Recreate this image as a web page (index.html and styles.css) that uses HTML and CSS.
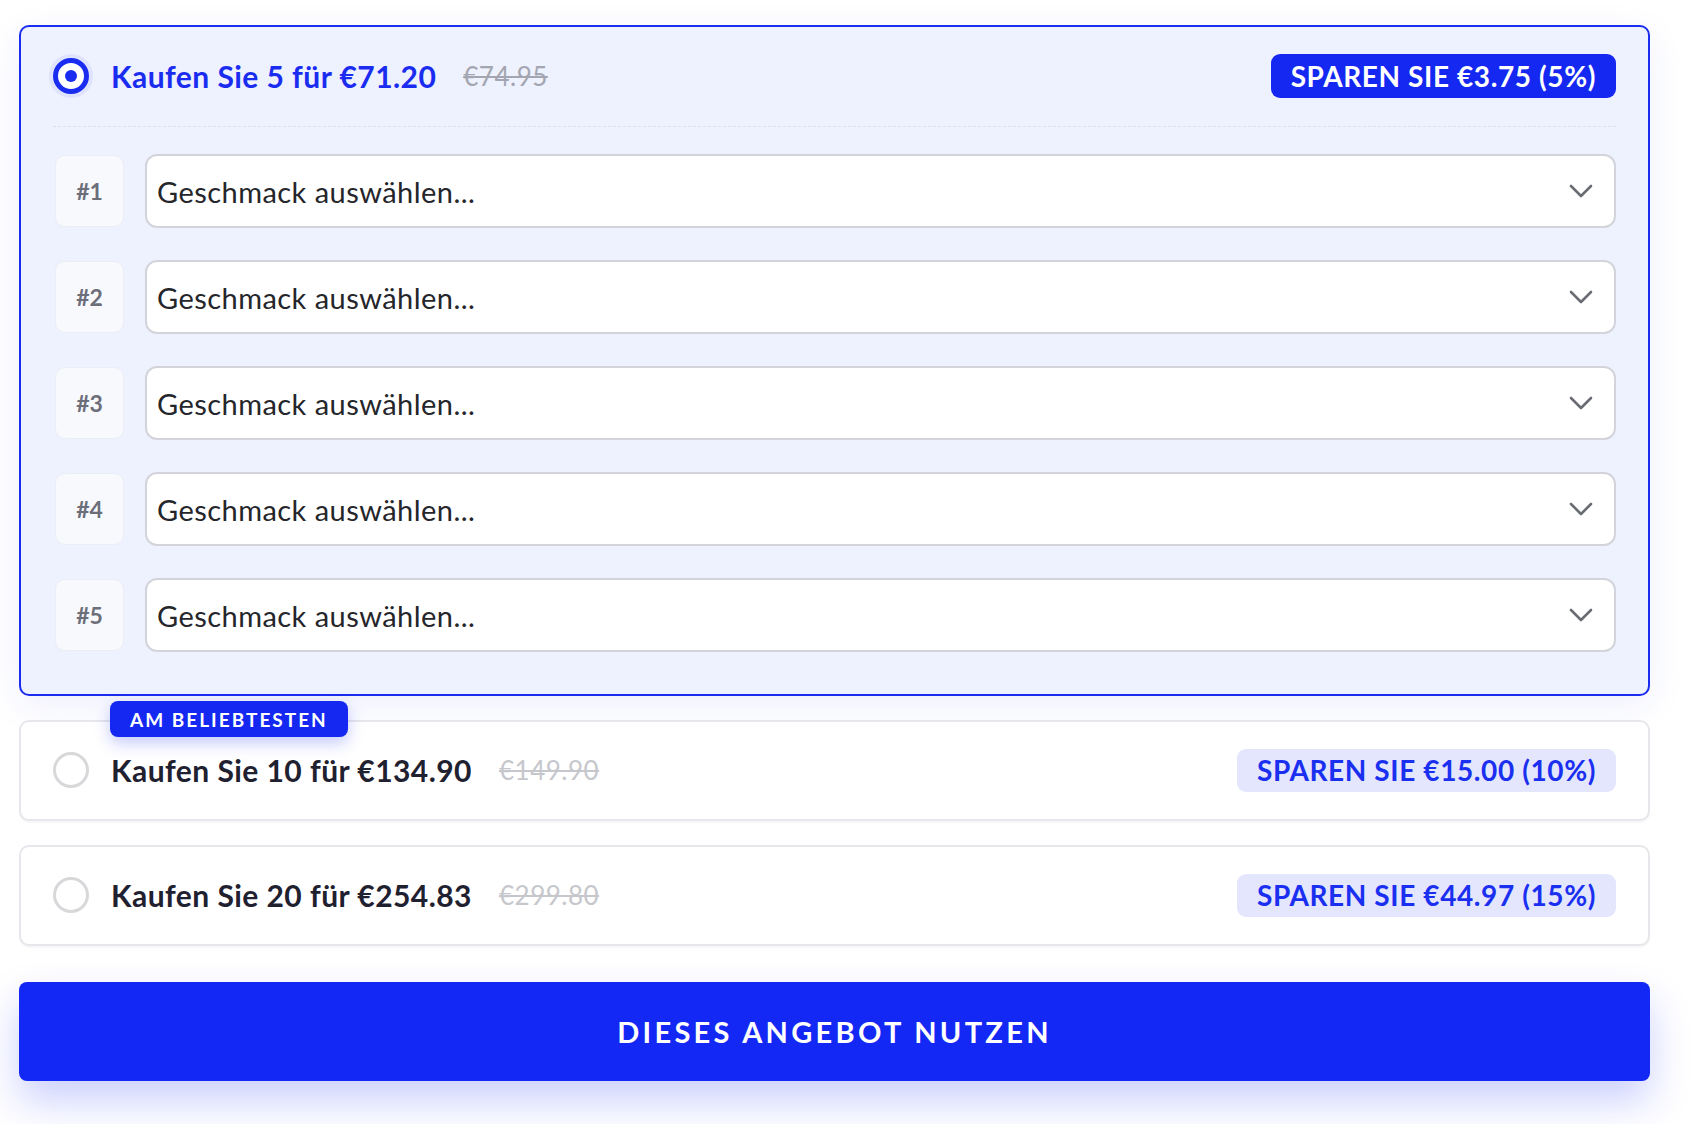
FILE: index.html
```html
<!DOCTYPE html>
<html lang="de">
<head>
<meta charset="utf-8">
<title>Bundle</title>
<link rel="stylesheet" href="styles.css">
</head>
<body>
<div class="wrap">
  <div class="offer offer--active">
    <div class="offer-head">
      <span class="radio radio--on"></span>
      <span class="title">Kaufen Sie 5 für €71.20</span>
      <span class="strike">€74.95</span>
      <span class="save save--solid">SPAREN SIE €3.75 (5%)</span>
    </div>
    <div class="rows">
      <div class="row"><span class="num">#1</span><div class="select"><span>Geschmack auswählen...</span><svg class="chev" viewBox="0 0 24 14" width="24" height="14"><path d="M2 2 L12 12 L22 2"/></svg></div></div>
      <div class="row"><span class="num">#2</span><div class="select"><span>Geschmack auswählen...</span><svg class="chev" viewBox="0 0 24 14" width="24" height="14"><path d="M2 2 L12 12 L22 2"/></svg></div></div>
      <div class="row"><span class="num">#3</span><div class="select"><span>Geschmack auswählen...</span><svg class="chev" viewBox="0 0 24 14" width="24" height="14"><path d="M2 2 L12 12 L22 2"/></svg></div></div>
      <div class="row"><span class="num">#4</span><div class="select"><span>Geschmack auswählen...</span><svg class="chev" viewBox="0 0 24 14" width="24" height="14"><path d="M2 2 L12 12 L22 2"/></svg></div></div>
      <div class="row"><span class="num">#5</span><div class="select"><span>Geschmack auswählen...</span><svg class="chev" viewBox="0 0 24 14" width="24" height="14"><path d="M2 2 L12 12 L22 2"/></svg></div></div>
    </div>
  </div>

  <div class="offer">
    <span class="popular">AM BELIEBTESTEN</span>
    <div class="offer-head">
      <span class="radio"></span>
      <span class="title title--dark">Kaufen Sie 10 für €134.90</span>
      <span class="strike strike--light">€149.90</span>
      <span class="save save--soft">SPAREN SIE €15.00 (10%)</span>
    </div>
  </div>

  <div class="offer">
    <div class="offer-head">
      <span class="radio"></span>
      <span class="title title--dark">Kaufen Sie 20 für €254.83</span>
      <span class="strike strike--light">€299.80</span>
      <span class="save save--soft">SPAREN SIE €44.97 (15%)</span>
    </div>
  </div>

  <button class="cta">DIESES ANGEBOT NUTZEN</button>
</div>
</body>
</html>
```

FILE: styles.css
```css
* { box-sizing: border-box; }
html, body { margin: 0; padding: 0; background: #ffffff; }
body { font-family: Lato, "Noto Sans", sans-serif; color: #1f2130; }

.wrap {
  width: 1631px;
  margin-left: 19px;
  padding-top: 25px;
  padding-bottom: 60px;
  display: flex;
  flex-direction: column;
  gap: 24px;
}

.offer {
  position: relative;
  background: #ffffff;
  border: 2px solid #e6e7eb;
  border-radius: 10px;
  padding: 26px 32px 27px 32px;
  box-shadow: 0 2px 0 rgba(0,0,0,0.03);
}
.offer--active {
  background: #eef1fe;
  border-color: #1a2cf0;
  padding: 27px 32px 42px 32px;
  box-shadow: 0 10px 36px rgba(40,50,230,0.08);
}

.offer-head {
  display: flex;
  align-items: center;
  height: 44px;
}
.offer--active .offer-head {
  height: 44px;
  box-sizing: content-box;
  padding-bottom: 28px;
  border-bottom: 1px dashed #dde0ea;
}

.radio {
  width: 36px;
  height: 36px;
  border-radius: 50%;
  border: 3px solid #d8d8db;
  background: #fff;
  flex: none;
  display: flex;
  align-items: center;
  justify-content: center;
}
.radio--on {
  border: 5px solid #1a2cf0;
  box-shadow: 0 0 0 4px rgba(26,44,240,0.07);
}
.radio--on::after {
  content: "";
  width: 12px;
  height: 12px;
  border-radius: 50%;
  background: #1a2cf0;
}

.title {
  margin-left: 22px;
  font-weight: 700;
  font-size: 30px;
  letter-spacing: 0.45px;
  color: #1a2cf0;
  white-space: nowrap;
}
.title--dark { color: #1f2130; }

.strike {
  margin-left: 27px;
  font-size: 26px;
  letter-spacing: 0.5px;
  color: #a3a6b0;
  text-decoration: line-through;
  white-space: nowrap;
}
.strike--light { color: #c6c7cc; }

.save {
  margin-left: auto;
  height: 44px;
  display: flex;
  align-items: center;
  padding: 0 20px;
  border-radius: 9px;
  font-weight: 700;
  font-size: 28px;
  letter-spacing: 0.6px;
  white-space: nowrap;
}
.save--solid { background: #1428f2; color: #fff; }
.save--soft { background: #e3e6fd; color: #1a2ff0; height: 43px; }

.rows {
  margin-top: 27px;
  display: flex;
  flex-direction: column;
  gap: 32px;
}
.row {
  display: flex;
  align-items: center;
  gap: 21px;
  padding-left: 2px;
}
.num {
  width: 69px;
  height: 72px;
  flex: none;
  display: flex;
  align-items: center;
  justify-content: center;
  background: #f8f9fd;
  border: 1px solid #eceef5;
  border-radius: 10px;
  font-weight: 700;
  font-size: 23px;
  color: #6c6e79;
}
.select {
  flex: 1;
  height: 74px;
  display: flex;
  align-items: center;
  justify-content: space-between;
  background: #fff;
  border: 2px solid #d3d4db;
  border-radius: 12px;
  padding: 0 21px 0 10px;
  font-size: 29px;
  letter-spacing: 0.45px;
  color: #25262b;
}
.chev { fill: none; stroke: #6a6c73; stroke-width: 2.6; stroke-linecap: round; stroke-linejoin: round; }

.popular {
  position: absolute;
  left: 89px;
  top: -21px;
  height: 36px;
  padding: 0 20px;
  display: flex;
  align-items: center;
  background: #1428f2;
  color: #fff;
  border-radius: 8px;
  font-weight: 700;
  font-size: 19px;
  letter-spacing: 2px;
  box-shadow: 0 6px 16px rgba(20,40,242,0.25);
}

.cta {
  margin-top: 12px;
  height: 99px;
  border: none;
  border-radius: 8px;
  background: #1428f5;
  color: #fff;
  font-family: Lato, "Noto Sans", sans-serif;
  font-weight: 700;
  font-size: 29px;
  letter-spacing: 3.3px;
  box-shadow: 0 20px 40px rgba(20,40,245,0.22);
  cursor: pointer;
}
```
